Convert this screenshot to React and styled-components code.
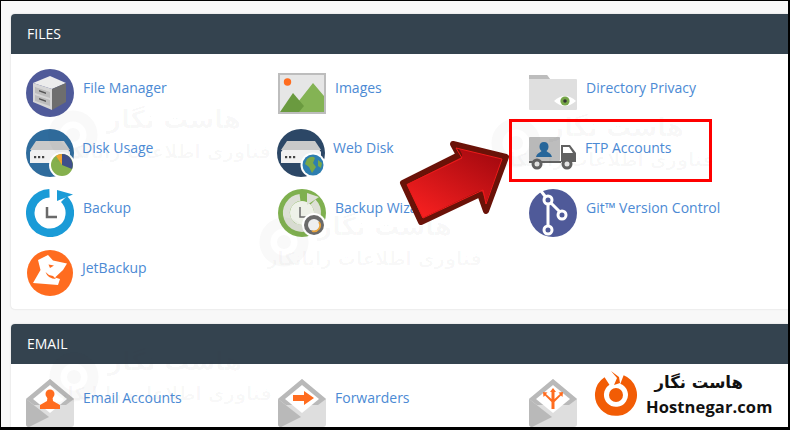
import React from "react";
import styled, { createGlobalStyle } from "styled-components";

const Global = createGlobalStyle`
  html, body { margin: 0; padding: 0; background: #000; }
  body { font-family: "Open Sans", "Liberation Sans", sans-serif; }
`;

const Frame = styled.div`
  position: relative;
  box-sizing: border-box;
  width: 790px;
  height: 430px;
  overflow: hidden;
  border-style: solid;
  border-color: #000;
  border-width: 1px 2px 3px 1px;
  background: #f8f8f8;
  padding: 13px 0 0 10px;
`;

const Panel = styled.section`
  background: #fff;
  border-radius: 4px 0 0 4px;
  box-shadow: 0 0 2px rgba(0, 0, 0, 0.16);
  margin-bottom: 15px;
`;

const PanelHeader = styled.h2`
  margin: 0;
  height: 40px;
  box-sizing: border-box;
  padding-left: 16px;
  background: #34434f;
  border-radius: 4px 0 0 0;
  color: #fff;
  font-size: 14px;
  font-weight: 400;
  line-height: 39px;
`;

const TileGrid = styled.div`
  display: grid;
  grid-template-columns: repeat(3, 251.5px);
  grid-auto-rows: 48px;
  row-gap: 12px;
  padding: 15px 0 12px 15px;
`;

const Tile = styled.div`
  display: flex;
  align-items: flex-start;
  margin-left: ${(p) => p.$shift || 0}px;
`;

const IconBox = styled.svg`
  flex: none;
  width: 48px;
  height: 48px;
`;

const TileLabel = styled.a`
  margin-left: ${(p) => p.$gap ?? 9}px;
  margin-top: 9px;
  font-size: 14px;
  line-height: 20px;
  color: #4c8ad4;
  white-space: nowrap;
`;

const Watermark = styled.div`
  position: absolute;
  left: ${(p) => p.$x}px;
  top: ${(p) => p.$y}px;
  width: 240px;
  height: 70px;
  pointer-events: none;
`;

const WatermarkRing = styled.svg`
  position: absolute;
  left: -6px;
  top: 1px;
  width: 56px;
  height: 56px;
`;

const WatermarkTitle = styled.div`
  position: absolute;
  left: 72px;
  top: 0;
  width: 118px;
  direction: rtl;
  font-family: "DejaVu Sans", sans-serif;
  font-size: 25px;
  font-weight: 700;
  line-height: 32px;
  white-space: nowrap;
  color: rgba(60, 60, 60, 0.03);
`;

const WatermarkLine = styled.div`
  position: absolute;
  left: 48px;
  top: 34px;
  width: 172px;
  direction: rtl;
  font-family: "DejaVu Sans", sans-serif;
  font-size: 18px;
  font-weight: 700;
  line-height: 28px;
  white-space: nowrap;
  color: rgba(60, 60, 60, 0.03);
`;

const Highlight = styled.div`
  position: absolute;
  left: 508px;
  top: 118px;
  width: 203px;
  height: 63px;
  box-sizing: border-box;
  border: 3px solid #f00;
`;

const Arrow = styled.svg`
  position: absolute;
  left: 395px;
  top: 130px;
  width: 120px;
  height: 100px;
`;

const Brand = styled.div`
  position: absolute;
  right: 0;
  bottom: 0;
  width: 202px;
  height: 63px;
  background: #fff;
`;

const BrandMark = styled.svg`
  position: absolute;
  left: 8px;
  top: 5px;
  width: 44px;
  height: 48px;
`;

const BrandName = styled.div`
  position: absolute;
  left: 57px;
  top: 7px;
  width: 100px;
  text-align: right;
  direction: rtl;
  font-family: "DejaVu Sans", sans-serif;
  font-size: 16.5px;
  font-weight: 700;
  line-height: 24px;
  color: #111;
  white-space: nowrap;
`;

const BrandSite = styled.div`
  position: absolute;
  left: 60px;
  top: 31px;
  font-family: "Open Sans", sans-serif;
  font-size: 16.5px;
  font-weight: 700;
  line-height: 24px;
  letter-spacing: 0.1px;
  color: #111;
`;

const Server = ({ bg }) => (
  <>
    <circle cx="24" cy="24" r="24" fill={bg} />
    <path d="M10 15H38L44 23V34H4V23Z" fill="#f1f1f1" />
    <path d="M10 12H38L44 21H4Z" fill="#c9c9c9" />
    <circle cx="36" cy="27" r="1.5" fill="#e4564a" />
    <circle cx="40" cy="27" r="1.5" fill="#8cb552" />
    <rect x="8" y="27" width="2.2" height="2.2" fill="#444" />
    <rect x="12" y="27" width="2.2" height="2.2" fill="#444" />
    <rect x="16" y="27" width="2.2" height="2.2" fill="#444" />
  </>
);

const Envelope = ({ children }) => (
  <>
    <path d="M24 0L48 20V45Q48 48 45 48H3Q0 48 0 45V20Z" fill="#dedede" />
    <path d="M0 20L23 38L3 48Q0 48 0 45Z" fill="#b9b9b9" />
    <path d="M24 0L48 20L40 26H8L0 20Z" fill="#b9b9b9" />
    <path d="M24 6L41 20L24 34L7 20Z" fill="#fff" />
    {children}
  </>
);

const drawings = {
  files: (
    <>
      <circle cx="24" cy="24" r="24" fill="#4f5a99" />
      <path d="M24 7L40 14L26 20L7 14Z" fill="#ececec" />
      <path d="M7 14L26 20V41L7 33Z" fill="#d6d6d6" />
      <path d="M26 20L40 14V33L26 41Z" fill="#6e6e6e" />
      <path d="M9 18L24 23V29L9 24ZM9 26L24 31V37L9 32Z" fill="#bdbdbd" />
      <path d="M13 21L20 23.5V25L13 22.5ZM13 29L20 31.5V33L13 30.5Z" fill="#555" />
    </>
  ),
  disk: (
    <>
      <Server bg="#2f6c9d" />
      <circle cx="36" cy="36" r="13" fill="#fff" />
      <circle cx="36" cy="36" r="11" fill="#85b04d" />
      <path d="M36 36V25A11 11 0 0 1 46 40Z" fill="#3f4f8a" />
      <path d="M36 36V25A11 11 0 0 0 30 27Z" fill="#f2a531" />
    </>
  ),
  images: (
    <>
      <rect x="1" y="5" width="46" height="39" fill="#e6e6e6" stroke="#bdbdbd" strokeWidth="2" />
      <circle cx="9.5" cy="13" r="3.7" fill="#ff6c1f" />
      <path d="M12 43L24 28L35 14L46 27V43Z" fill="#84b354" />
      <path d="M2 43L15 24L26 37L21 43Z" fill="#6a9a3f" />
    </>
  ),
  privacy: (
    <>
      <path d="M0 8Q0 6 2 6H18L21 10H47Q48 10 48 11V40Q48 41 47 41H1Q0 41 0 40Z" fill="#dfdfdf" />
      <path d="M0 6H18L21 10H0Z" fill="#bdbdbd" />
      <path d="M25 32Q36 22 47 32Q36 42 25 32Z" fill="#fff" />
      <circle cx="36" cy="32" r="4.6" fill="#77a64a" />
      <circle cx="36" cy="32" r="1.8" fill="#333" />
    </>
  ),
  webdisk: (
    <>
      <Server bg="#2c4766" />
      <circle cx="36" cy="36" r="12.5" fill="#fff" />
      <circle cx="36" cy="36" r="10.5" fill="#2d7eb0" />
      <path d="M30 30Q35 26 38 29L36 34L39 38L35 44L32 38L28 35Z" fill="#7aa848" />
      <path d="M41 31L45 34L44 39L41 37Z" fill="#7aa848" />
    </>
  ),
  ftp: (
    <>
      <rect x="0" y="8" width="31" height="24" rx="1" fill="#bdbdbd" />
      <path d="M15 13C18 13 19.500 15 19.500 17.500C19.500 19.500 18.700 21 17.500 22C18.500 23.500 22 24 23 28H7C8 24 11.500 23.500 12.500 22C11.300 21 10.500 19.500 10.500 17.500C10.500 15 12 13 15 13Z" fill="#27669a" />
      <path d="M32 16H41L47 24V33H32Z" fill="#616161" />
      <path d="M34 18H40L44 24H34Z" fill="#fff" />
      <rect x="0" y="32" width="32" height="2" fill="#616161" />
      <circle cx="8" cy="35" r="5.500" fill="#616161" />
      <circle cx="8" cy="35" r="2.500" fill="#e4e4e4" />
      <circle cx="38" cy="35" r="5.500" fill="#616161" />
      <circle cx="38" cy="35" r="2.500" fill="#e4e4e4" />
    </>
  ),
  backup: (
    <>
      <path d="M23.500 4.250A19.750 19.750 0 1 0 38 10" fill="none" stroke="#1a9bd7" strokeWidth="8.500" />
      <path d="M31 1L47 5.500L31 12Z" fill="#1a9bd7" />
      <path d="M21 18V28H31" fill="none" stroke="#6a6a6a" strokeWidth="2.500" />
    </>
  ),
  wizard: (
    <>
      <circle cx="24" cy="24" r="24" fill="#7fb04f" />
      <path d="M22 8.500A15.500 15.500 0 1 0 35 13" fill="none" stroke="#dde0d6" strokeWidth="7" />
      <circle cx="24" cy="24" r="12" fill="#eef1e8" />
      <path d="M29 4L41 8L29 16Z" fill="#dde0d6" />
      <path d="M22 18V28H31" fill="none" stroke="#6a6a6a" strokeWidth="1.500" />
      <circle cx="36" cy="36" r="12" fill="#fff" />
      <circle cx="36" cy="36" r="10" fill="#6a6a6a" />
      <circle cx="36" cy="36" r="6" fill="#eee" />
      <path d="M41 33A6 6 0 0 1 34 42" fill="none" stroke="#e8a33c" strokeWidth="1.800" />
    </>
  ),
  git: (
    <>
      <circle cx="24" cy="24" r="24" fill="#4f5a99" />
      <path d="M12 2L19 11V42M19 11L34 26" fill="none" stroke="#fff" strokeWidth="3" />
      <circle cx="19" cy="11" r="4" fill="#4f5a99" stroke="#fff" strokeWidth="3" />
      <circle cx="33" cy="26" r="4" fill="#4f5a99" stroke="#fff" strokeWidth="3" />
      <circle cx="19" cy="41" r="4" fill="#4f5a99" stroke="#fff" strokeWidth="3" />
    </>
  ),
  jet: (
    <>
      <circle cx="24" cy="24" r="23" fill="#ff6c1f" />
      <path d="M12 11L22 6L27 11.500L41 14.500L37 21L29 28.500L34 30L32 36L7 34L14.500 21Z" fill="#fff" />
      <path d="M19.500 23Q22 30 30 30L27 27L23 26Z" fill="#ff6c1f" />
      <path d="M22.500 15.500L28 16.500L24 19Z" fill="#ff6c1f" />
    </>
  ),
  mail: (
    <Envelope>
      <circle cx="24" cy="15" r="4.500" fill="#ff6c1f" />
      <path d="M21.500 18H26.500L27 22L34 26V30H14V26L21 22Z" fill="#ff6c1f" />
    </Envelope>
  ),
  forward: (
    <Envelope>
      <path d="M15 16H26V12L36 19L26 26V22H15Z" fill="#ff6c1f" />
    </Envelope>
  ),
  routing: (
    <Envelope>
      <path d="M24 9L27 13H25.500V20L31 15L29.500 13.500L34 13L33.500 18L32 16.500L25.500 23V30H22.500V23L16 16.500L14.500 18L14 13L18.500 13.500L17 15L22.500 20V13H21Z" fill="#ff6c1f" />
    </Envelope>
  ),
};

const files = [
  { icon: "files", label: "File Manager" },
  { icon: "images", label: "Images", shift: 0.5 },
  { icon: "privacy", label: "Directory Privacy" },
  { icon: "disk", label: "Disk Usage", gap: 8 },
  { icon: "webdisk", label: "Web Disk", shift: -0.5, gap: 8 },
  { icon: "ftp", label: "FTP Accounts", gap: 8 },
  { icon: "backup", label: "Backup" },
  { icon: "wizard", label: "Backup Wizard", shift: 0.5 },
  { icon: "git", label: "Git™ Version Control" },
  { icon: "jet", label: "JetBackup", gap: 8 },
];

const email = [
  { icon: "mail", label: "Email Accounts" },
  { icon: "forward", label: "Forwarders", shift: 0.5 },
  { icon: "routing", label: "" },
];

const Tiles = ({ items }) => (
  <TileGrid>
    {items.map((t) => (
      <Tile key={t.icon} $shift={t.shift}>
        <IconBox viewBox="0 0 48 48">{drawings[t.icon]}</IconBox>
        {t.label && <TileLabel $gap={t.gap}>{t.label}</TileLabel>}
      </Tile>
    ))}
  </TileGrid>
);

const marks = [
  { x: 50, y: 103 },
  { x: 261, y: 210 },
  { x: 493, y: 111 },
  { x: 51, y: 345 },
];

export default function App() {
  return (
    <Frame>
      <Global />
      <Panel>
        <PanelHeader>FILES</PanelHeader>
        <Tiles items={files} />
      </Panel>
      <Panel>
        <PanelHeader>EMAIL</PanelHeader>
        <Tiles items={email} />
      </Panel>

      {marks.map((m) => (
        <Watermark key={m.x + "-" + m.y} $x={m.x} $y={m.y}>
          <WatermarkRing viewBox="0 0 56 56">
            <circle cx="28" cy="30" r="19" fill="none" stroke="rgba(60,60,60,0.03)" strokeWidth="11" />
            <circle cx="28" cy="30" r="7" fill="rgba(60,60,60,0.03)" />
          </WatermarkRing>
          <WatermarkTitle>هاست نگار</WatermarkTitle>
          <WatermarkLine>فناوری اطلاعات رایانکار</WatermarkLine>
        </Watermark>
      ))}

      <Highlight />

      <Arrow viewBox="0 0 120 100">
        <defs>
          <linearGradient id="arrowFill" x1="0.2" y1="0.9" x2="0.8" y2="0.1">
            <stop offset="0" stopColor="#f41f1f" />
            <stop offset="1" stopColor="#a80a10" />
          </linearGradient>
        </defs>
        <path
          d="M57 13L63 24L7 52L25 91L84 63L90 80L110 26Z"
          fill="url(#arrowFill)"
          stroke="#6a1208"
          strokeWidth="6"
          strokeLinejoin="round"
        />
        <path d="M60 17L66 27L11 53.500L27 87L87 59L90 73L106 28Z" fill="none" stroke="#ee1a1a" strokeWidth="1" />
      </Arrow>

      <Brand>
        <BrandMark viewBox="0 0 44 48">
          <path d="M28 10.500A16.500 16.500 0 1 1 13 12" fill="none" stroke="#f25c05" strokeWidth="9" />
          <path d="M17 2L25 8L26 14L20 16L23 9Z" fill="#f25c05" />
          <circle cx="22" cy="26" r="7" fill="#f25c05" />
        </BrandMark>
        <BrandName>هاست نگار</BrandName>
        <BrandSite>Hostnegar.com</BrandSite>
      </Brand>
    </Frame>
  );
}
